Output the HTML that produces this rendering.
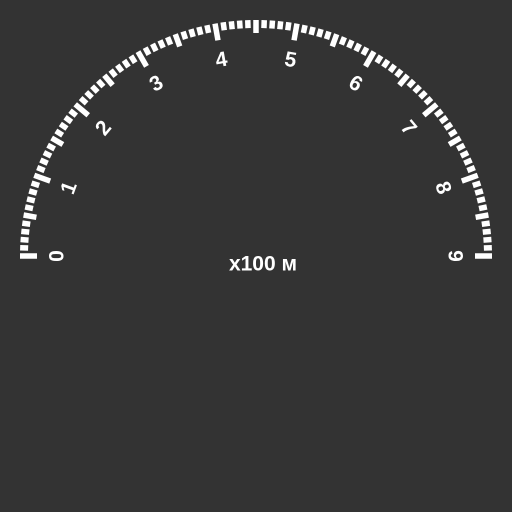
<!DOCTYPE html>
<html><head><meta charset="utf-8"><style>
html,body{margin:0;padding:0;background:#333333;width:512px;height:512px;overflow:hidden}
</style></head><body>
<svg width="512" height="512" viewBox="0 0 512 512" xmlns="http://www.w3.org/2000/svg" id="s">
<rect width="512" height="512" fill="#333333"/>
<g id="t" stroke="#ffffff" stroke-width="5.5"></g>
<g id="l" fill="#ffffff" font-family="Liberation Sans, sans-serif" font-size="21" font-weight="bold" text-anchor="middle" dominant-baseline="central"></g>
<text x="263" y="264" fill="#ffffff" font-family="Liberation Sans, sans-serif" font-size="21" font-weight="bold" text-anchor="middle" dominant-baseline="central">x100 м</text>
</svg>
<script>
var cx=256,cy=256,R=236,t=document.getElementById('t'),l=document.getElementById('l'),ns='http://www.w3.org/2000/svg';
for(var i=0;i<=90;i++){var a=(180-i*2)*Math.PI/180;var len=i%10==0?17:(i%5==0?13:8);
var ln=document.createElementNS(ns,'line');
ln.setAttribute('x1',cx+R*Math.cos(a));ln.setAttribute('y1',cy-R*Math.sin(a));
ln.setAttribute('x2',cx+(R-len)*Math.cos(a));ln.setAttribute('y2',cy-(R-len)*Math.sin(a));t.appendChild(ln);}
for(var n=0;n<=9;n++){var d=180-n*20,a=d*Math.PI/180,r=199;var x=cx+r*Math.cos(a),y=cy-r*Math.sin(a);
var tx=document.createElementNS(ns,'text');tx.setAttribute('x',x);tx.setAttribute('y',y);
tx.setAttribute('transform','rotate('+(90-d)+' '+x+' '+y+')');tx.textContent=n;l.appendChild(tx);}
</script>
</body></html>
